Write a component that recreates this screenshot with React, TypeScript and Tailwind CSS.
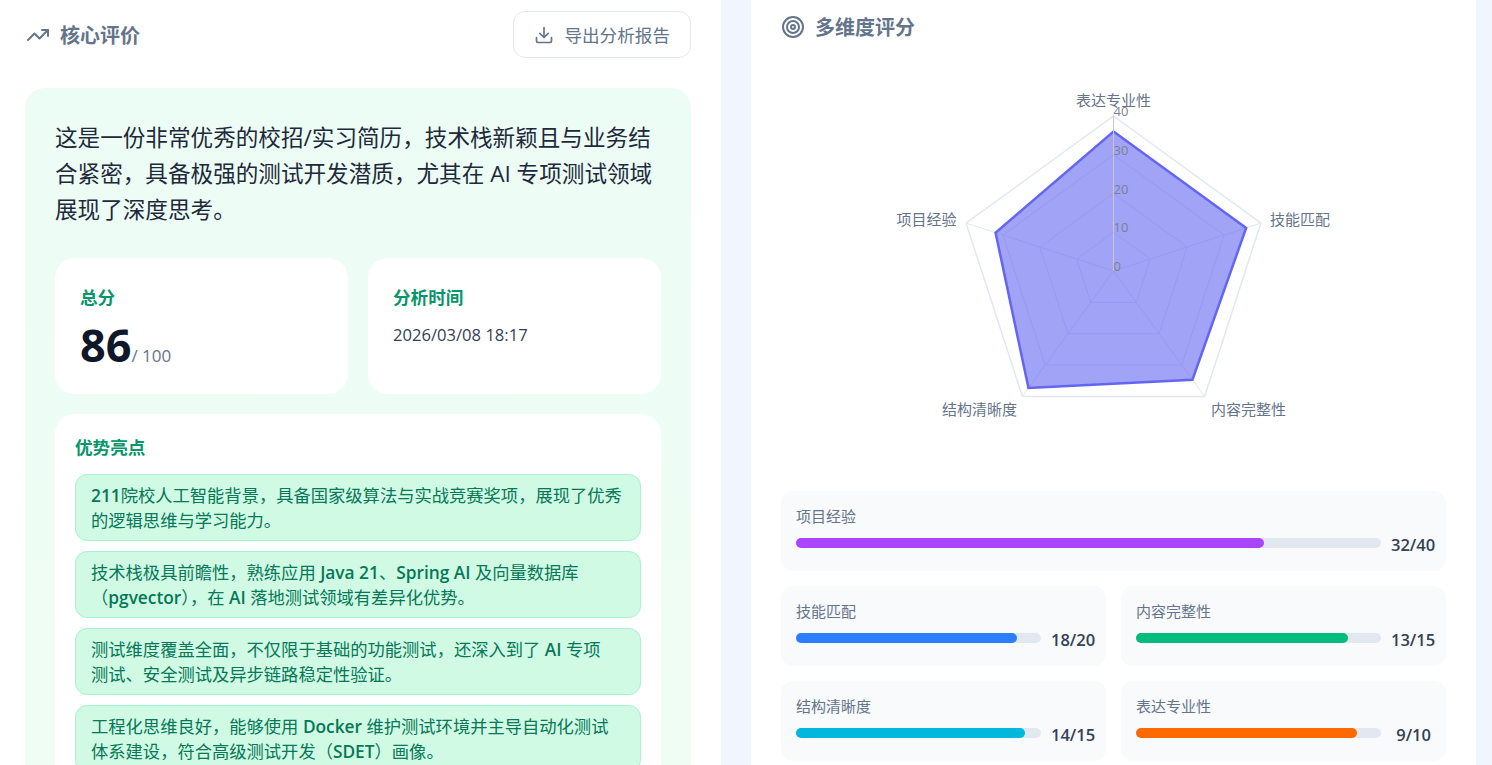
import { Download, Target, TrendingUp } from "lucide-react";

const FONT = "[font-family:'Open_Sans','Noto_Sans_CJK_SC',sans-serif]";

const highlights = [
  "211院校人工智能背景，具备国家级算法与实战竞赛奖项，展现了优秀的逻辑思维与学习能力。",
  "技术栈极具前瞻性，熟练应用 Java 21、Spring AI 及向量数据库（pgvector），在 AI 落地测试领域有差异化优势。",
  "测试维度覆盖全面，不仅限于基础的功能测试，还深入到了 AI 专项\n测试、安全测试及异步链路稳定性验证。",
  "工程化思维良好，能够使用 Docker 维护测试环境并主导自动化测试体系建设，符合高级测试开发（SDET）画像。",
];

const cx = 332.5;
const cy = 211;
const R = 155;

// clockwise from the top axis
const axes = [
  { label: "表达专业性", ratio: 9 / 10, x: 332.5, y: 41, anchor: "middle" },
  { label: "技能匹配", ratio: 18 / 20, x: 489, y: 160, anchor: "start" },
  { label: "内容完整性", ratio: 13 / 15, x: 430, y: 350, anchor: "start" },
  { label: "结构清晰度", ratio: 14 / 15, x: 236, y: 350, anchor: "end" },
  { label: "项目经验", ratio: 32 / 40, x: 175.5, y: 160, anchor: "end" },
];

function point(i: number, r: number) {
  const a = (-90 + i * 72) * (Math.PI / 180);
  return [cx + Math.cos(a) * r, cy + Math.sin(a) * r];
}

function ring(scale: number) {
  return axes.map((_, i) => point(i, R * scale).join(",")).join(" ");
}

function Radar() {
  const data = axes.map((a, i) => point(i, R * a.ratio).join(",")).join(" ");
  return (
    <svg width={665} height={421} className="block" viewBox="0 0 665 421">
      {[0.25, 0.5, 0.75, 1].map((s) => (
        <polygon key={s} points={ring(s)} fill="none" stroke="#e2e8f0" strokeWidth={s === 1 ? 1.5 : 1} />
      ))}
      {axes.map((_, i) => {
        const [x, y] = point(i, R);
        return <line key={i} x1={cx} y1={cy} x2={x} y2={y} stroke="#e2e8f0" strokeWidth={1} />;
      })}
      <polygon points={data} fill="#6366f1" fillOpacity={0.6} stroke="#6366f1" strokeWidth={2.5} />
      <line x1={cx} y1={cy} x2={cx} y2={cy - R} stroke="#c8c8cc" strokeWidth={1} />
      {["0", "10", "20", "30", "40"].map((t, i) => (
        <text key={t} x={cx} y={cy - i * 38.75} fill="#7b8190" fontSize={13} textAnchor="start">
          {t}
        </text>
      ))}
      {axes.map((a) => (
        <text key={a.label} x={a.x} y={a.y + 5} fill="#64748b" fontSize={15} textAnchor={a.anchor as "start" | "middle" | "end"}>
          {a.label}
        </text>
      ))}
    </svg>
  );
}

function Metric({ label, value, pct, color }: { label: string; value: string; pct: string; color: string }) {
  return (
    <div className="h-[80px] rounded-xl bg-[#f8fafc] pl-[15px] pt-[14px]">
      <div className="text-[15px] leading-[22px] text-[#64748b]">{label}</div>
      <div className="mt-[5px] flex items-start pr-[15px]">
        <div className="mt-[6px] h-[10px] flex-1 rounded-full bg-[#e2e8f0]">
          <div className={`h-full rounded-full ${color} ${pct}`} />
        </div>
        <div className="ml-[10px] w-[40px] whitespace-nowrap text-right text-[16.5px] leading-[26px] font-semibold text-[#334155]">
          {value}
        </div>
      </div>
    </div>
  );
}

// latin words and numbers read heavier than the chinese around them
function Highlight({ text }: { text: string }) {
  return (
    <div className="h-[67px] whitespace-pre-line rounded-xl border border-[#a7f3d0] bg-[#d1fae5] px-[15px] py-[7.5px] text-[17.3px] leading-[25px] text-[#047857]">
      {text.split(/([A-Za-z0-9]+(?: [A-Za-z0-9]+)*)/).map((part, i) =>
        i % 2 === 1 ? (
          <span key={i} className="font-semibold">
            {part}
          </span>
        ) : (
          part
        ),
      )}
    </div>
  );
}

export default function App() {
  return (
    <div className={`${FONT} flex h-screen items-stretch overflow-hidden bg-[#f1f5fe]`}>
      <div className="w-[721px] shrink-0 bg-white pl-[25px] pr-[30px] pt-[11px]">
        <div className="flex h-[47px] items-center justify-between pl-px">
          <div className="flex items-center gap-[10px] text-[20px] font-bold text-[#64748b]">
            <TrendingUp size={24} />
            <span className="mt-[3px]">核心评价</span>
          </div>
          <button className="flex h-[47px] items-center gap-[10px] rounded-xl border border-[#e2e8f0] bg-white px-[20px] text-[17.6px] text-[#64748b]">
            <Download size={20} />
            <span className="mt-[1px]">导出分析报告</span>
          </button>
        </div>

        <div className="mt-[30px] rounded-[20px] bg-gradient-to-b from-[#ecfdf5] to-[#f0fdf4] px-[30px] pt-[32px]">
          <p className="text-[22.6px] leading-[36px] text-[#1e293b]">
            这是一份非常优秀的校招/实习简历，技术栈新颖且与业务结合紧密，具备极强的测试开发潜质，尤其在 AI 专项测试领域展现了深度思考。
          </p>

          <div className="mt-[30px] grid grid-cols-2 gap-[20px]">
            <div className="h-[136px] rounded-[20px] bg-white pl-[25px] pt-[25px]">
              <div className="text-[17.6px] leading-[28px] font-bold text-[#059669]">总分</div>
              <div className="mt-[6px] flex items-baseline">
                <span className="text-[45px] leading-[56px] font-bold text-[#0f172a]">86</span>
                <span className="text-[17px] text-[#64748b]">/ 100</span>
              </div>
            </div>
            <div className="h-[136px] rounded-[20px] bg-white pl-[25px] pt-[25px]">
              <div className="text-[17.6px] leading-[28px] font-bold text-[#059669]">分析时间</div>
              <div className="mt-[11px] text-[16.6px] leading-[26px] text-[#334155]">2026/03/08 18:17</div>
            </div>
          </div>

          <div className="mt-[20px] rounded-[20px] bg-white px-[20px] pt-[19px] pb-[20px]">
            <div className="text-[17.6px] leading-[28px] font-bold text-[#059669]">优势亮点</div>
            <div className="mt-[13px] flex flex-col gap-[10px]">
              {highlights.map((h) => (
                <Highlight key={h} text={h} />
              ))}
            </div>
          </div>
        </div>
      </div>

      <div className="ml-[30px] w-[725px] shrink-0 bg-white px-[30px] pt-[15px]">
        <div className="flex h-[24px] items-center gap-[10px] text-[20px] font-bold text-[#64748b]">
          <Target size={24} />
          <span className="mt-[2px]">多维度评分</span>
        </div>
        <div className="mt-[21px]">
          <Radar />
        </div>
        <div className="mt-[10px] flex flex-col gap-[15px]">
          <Metric label="项目经验" value="32/40" pct="w-[80%]" color="bg-[#a944ff]" />
          <div className="grid grid-cols-2 gap-[15px]">
            <Metric label="技能匹配" value="18/20" pct="w-[90%]" color="bg-[#2b7fff]" />
            <Metric label="内容完整性" value="13/15" pct="w-[86.7%]" color="bg-[#00bc7d]" />
            <Metric label="结构清晰度" value="14/15" pct="w-[93.3%]" color="bg-[#00b8db]" />
            <Metric label="表达专业性" value="9/10" pct="w-[90%]" color="bg-[#ff6900]" />
          </div>
        </div>
      </div>
    </div>
  );
}
